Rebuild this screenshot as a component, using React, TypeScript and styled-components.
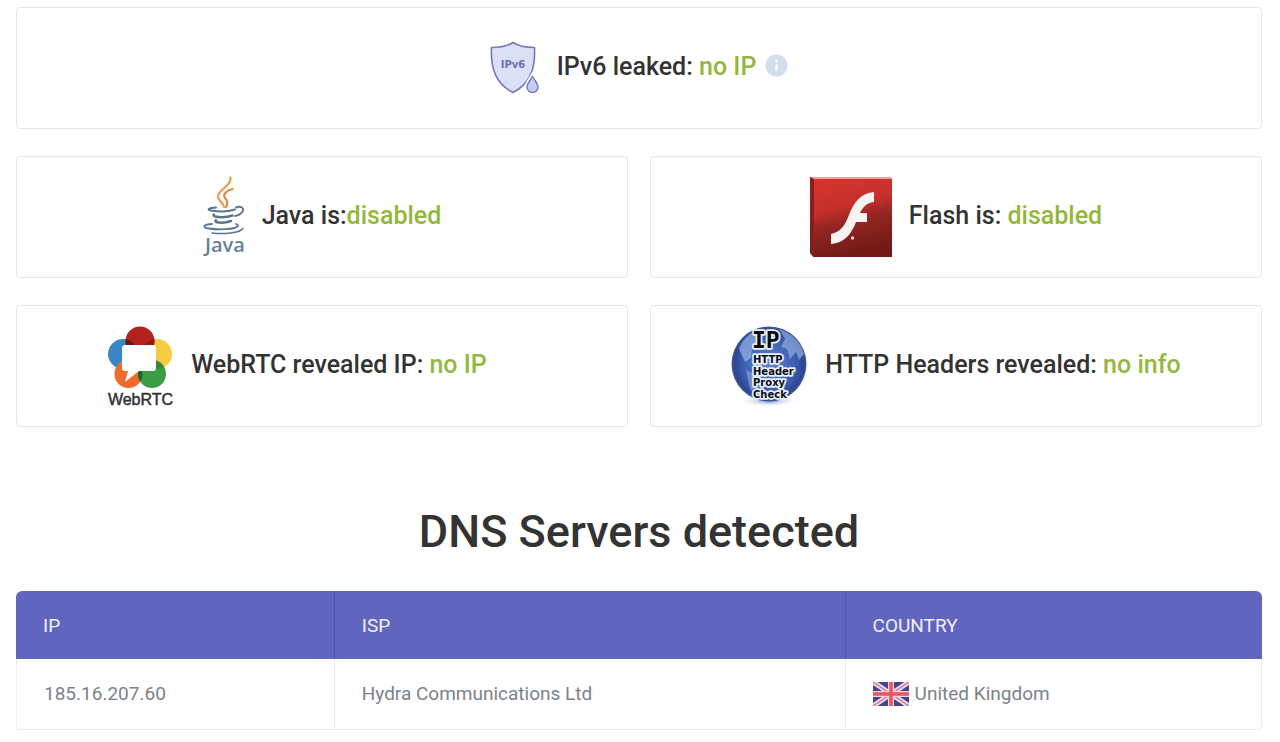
import React from 'react';
import styled, { createGlobalStyle } from 'styled-components';

const GlobalStyle = createGlobalStyle`
  *, *::before, *::after { box-sizing: border-box; }
  body {
    margin: 0;
    background: #fff;
    color: #333;
    font-family: Roboto, "Liberation Sans", sans-serif;
  }
`;

const Page = styled.main`
  padding: 7px 18px 12px 16px;
`;

const Grid = styled.section`
  display: grid;
  grid-template-columns: 1fr 1fr;
  column-gap: 22px;
  row-gap: 27px;
`;

const Card = styled.article<{ $wide?: boolean; $trailing?: number }>`
  grid-column: ${(p) => (p.$wide ? '1 / -1' : 'auto')};
  display: flex;
  align-items: center;
  justify-content: center;
  gap: 17px;
  min-height: 122px;
  padding: 8px ${(p) => p.$trailing ?? 0}px 8px 0;
  border: 1px solid #e6e6e8;
  border-radius: 4px;
`;

const Label = styled.p`
  display: flex;
  align-items: center;
  margin: 0;
  padding-bottom: 2px;
  font-family: Roboto, "Noto Sans", sans-serif;
  font-size: 25px;
  font-weight: 500;
  line-height: 32px;
  white-space: pre;
`;

const Status = styled.span`
  color: #94b83d;
`;

const InfoButton = styled.button`
  display: flex;
  margin: 0 0 4px 9px;
  padding: 0;
  border: 0;
  background: none;
  cursor: pointer;
`;

const Title = styled.h2`
  margin: 73px 0 28px;
  font-family: Roboto, "Noto Sans", sans-serif;
  font-size: 45px;
  font-weight: 500;
  line-height: 63px;
  text-align: center;
`;

const Table = styled.table`
  width: 100%;
  table-layout: fixed;
  border-collapse: separate;
  border-spacing: 0;
  text-align: left;
  font-size: 19px;
  line-height: 24px;
`;

const Col = styled.col<{ $width: string }>`
  width: ${(p) => p.$width};
`;

const HeadCell = styled.th`
  height: 68px;
  padding: 1px 27px 0;
  background: #6265be;
  color: #f0f0fa;
  font-weight: 400;

  & + & { border-left: 1px solid #5356b2; }
  &:first-child { border-top-left-radius: 6px; }
  &:last-child { border-top-right-radius: 6px; }
`;

const Cell = styled.td`
  height: 71px;
  padding: 0 27px;
  border: solid #ececee;
  border-width: 0 0 1px 1px;
  color: #7b8389;

  &:first-child { border-bottom-left-radius: 4px; }
  &:last-child { border-right-width: 1px; border-bottom-right-radius: 4px; }
`;

const Country = styled.span`
  display: flex;
  align-items: center;
  gap: 6px;
`;

const ShieldIcon = () => (
  <svg width="50" height="56" viewBox="0 0 50 56" role="img" aria-label="IPv6 shield">
    <path d="M23 2.5C29 6.5 37 7.5 44.5 7.5C45.5 29 40 44 23 52.5C6 44 .5 29 1.5 7.5C9 7.5 17 6.5 23 2.5Z" fill="#dbe0f7" stroke="#7779b4" strokeWidth="1.6" strokeLinejoin="round" />
    <path d="M42.5 35.5C40 40 37 43 37 47A5.5 5.5 0 0 0 48 47C48 43 45 40 42.5 35.5Z" fill="#c3cdf1" stroke="#fff" strokeWidth="4" />
    <path d="M42.5 36.5C40 41 37 43.5 37 47A5.5 5.5 0 0 0 48 47C48 43.5 45 41 42.5 36.5Z" fill="#c3cdf1" stroke="#7779b4" strokeWidth="1.4" />
    <text x="23" y="28" textAnchor="middle" fontFamily="DejaVu Sans, sans-serif" fontWeight="700" fontSize="10" fill="#6d6fb3">IPv6</text>
  </svg>
);

const InfoIcon = () => (
  <svg width="23" height="23" viewBox="0 0 23 23" aria-hidden="true">
    <circle cx="11.5" cy="11.5" r="11" fill="#d2dee9" />
    <circle cx="11.5" cy="7" r="1.5" fill="#fff" />
    <path d="M11.5 10.5V16.5" stroke="#fff" strokeWidth="2.4" />
  </svg>
);

const JavaIcon = () => (
  <svg width="42" height="82" viewBox="0 0 42 82" role="img" aria-label="Java">
    <g fill="none" strokeLinecap="round">
      <path d="M27.5 1.5C29 10 14 14 15 21C16 26 21 27 21 31" stroke="#e9a057" strokeWidth="2.3" />
      <path d="M29.5 13C23 15 19.5 18 22 22C25 25 25 28 23 31" stroke="#d98c4a" strokeWidth="2.2" />
      <g stroke="#5d758c">
        <path d="M13 31.5C6 32 3 33.5 8 34.5C16 36 26 35.5 32 33.5" strokeWidth="1.9" />
        <path d="M33 31.5C38 29.5 41.5 32 39.5 35.5C38 38 35 39.5 32 40" strokeWidth="1.9" />
        <path d="M11 38.5C8 41 21 42.5 29.5 39.5" strokeWidth="2.5" />
        <path d="M13 44C10 46.5 20 48 28 45" strokeWidth="2.5" />
        <path d="M9 48C1 48.5 -2 51.5 6 52.5C16 54 31 53.5 34.5 50.5C35.5 49.5 34.5 48.5 33 48" strokeWidth="1.8" />
        <path d="M9 57C20 58.5 37 57 40 52.5" strokeWidth="1.5" />
      </g>
    </g>
    <text x="2" y="76" fontFamily="Open Sans, sans-serif" fontSize="20" fontWeight="600" fill="#66819a">Java</text>
  </svg>
);

const FlashIcon = () => (
  <svg width="82" height="82" viewBox="0 0 82 82" role="img" aria-label="Flash">
    <defs>
      <linearGradient id="flash" x1="0" y1="0" x2=".25" y2="1">
        <stop offset="0" stopColor="#d9362e" />
        <stop offset=".45" stopColor="#c42f2b" />
        <stop offset=".62" stopColor="#972723" />
        <stop offset="1" stopColor="#741b18" />
      </linearGradient>
    </defs>
    <path d="M0 1L3 3V78L4 82L0 77Z" fill="#6d1f1c" />
    <path d="M0 1H80L82 3V81H4L1 77Z" fill="url(#flash)" />
    <path d="M0 1L4 3.5V79L1 77Z" fill="#861f1d" />
    <path d="M1 1H81V3H4Z" fill="#eba29c" />
    <path d="M64 16V26C56 27 53 31 50 37H57V46H46C41 59 34 67 21 68V58C31 56 35 49 39 39C44 26 51 17 64 16Z" fill="#f7f3f1" />
    <circle cx="42.5" cy="62" r="1.7" fill="#e8cfcb" />
  </svg>
);

const WebRtcIcon = () => (
  <svg width="67" height="82" viewBox="0 0 67 82" role="img" aria-label="WebRTC">
    <defs>
      <clipPath id="rtcRed"><circle cx="33" cy="16" r="14.5" /></clipPath>
      <clipPath id="rtcGreen"><circle cx="45" cy="49" r="14" /></clipPath>
    </defs>
    <circle cx="16" cy="29" r="15" fill="#3a87c7" />
    <circle cx="50" cy="29" r="15" fill="#f8cb42" />
    <circle cx="21.5" cy="49" r="14" fill="#ef6a2b" />
    <circle cx="45" cy="49" r="14" fill="#3a9c45" />
    <circle cx="33" cy="16" r="14.5" fill="#b3231d" />
    <g clipPath="url(#rtcRed)">
      <circle cx="16" cy="29" r="15" fill="#5f1919" />
      <circle cx="50" cy="29" r="15" fill="#9b170f" />
    </g>
    <g clipPath="url(#rtcGreen)">
      <circle cx="21.5" cy="49" r="14" fill="#18652b" />
      <circle cx="50" cy="29" r="15" fill="#3a8a35" />
    </g>
    <path d="M18 20H46Q49 20 49 23V43Q49 46 46 46H32L18 57L21 46H18Q15 46 15 43V23Q15 20 18 20Z" fill="#fff" />
    <text x="33.5" y="80" textAnchor="middle" fontFamily="Liberation Sans, Arial, sans-serif" fontSize="16" fill="#333" stroke="#333" strokeWidth=".5">WebRTC</text>
  </svg>
);

const GlobeIcon = () => (
  <svg width="77" height="82" viewBox="0 0 77 82" role="img" aria-label="IP HTTP header proxy check">
    <defs>
      <radialGradient id="globe" cx=".5" cy=".5" r=".5">
        <stop offset="0" stopColor="#5f86cf" />
        <stop offset=".7" stopColor="#3b5eb3" />
        <stop offset=".93" stopColor="#2c4692" />
        <stop offset="1" stopColor="#4c5a93" />
      </radialGradient>
      <radialGradient id="globeShade">
        <stop offset="0" stopColor="#6f8fca" />
        <stop offset="1" stopColor="#fff" stopOpacity="0" />
      </radialGradient>
    </defs>
    <ellipse cx="38" cy="76" rx="30" ry="6" fill="url(#globeShade)" />
    <circle cx="38" cy="39" r="37.5" fill="url(#globe)" />
    <path d="M8 24C12 12 22 5 32 4L35 9L28 12L26 20L21 24L20 33L14 37Z" fill="#91ade0" opacity=".75" />
    <path d="M48 4C61 8 70 18 73 29L68 35L65 27L59 34L56 24L50 22L54 14Z" fill="#91ade0" opacity=".7" />
    <path d="M15 45L24 49L28 58L26 71L19 64Z" fill="#8aa6da" opacity=".65" />
    <g fontFamily="DejaVu Sans, sans-serif" fontWeight="700" fill="#090c14" stroke="#eaf0fb" strokeWidth="3.5" strokeLinejoin="round" paintOrder="stroke">
      <text x="21" y="23" fontFamily="DejaVu Sans Mono, monospace" fontSize="23">IP</text>
      <g fontSize="10">
        <text x="22" y="38">HTTP</text>
        <text x="22" y="50">Header</text>
        <text x="22" y="61">Proxy</text>
        <text x="22" y="73">Check</text>
      </g>
    </g>
  </svg>
);

const UkFlag = () => (
  <svg width="36" height="24" viewBox="0 0 36 24" aria-hidden="true">
    <path d="M0 0H36V24H0Z" fill="#46458c" />
    <path d="M0 0L36 24M36 0L0 24" stroke="#e6dfef" strokeWidth="5" />
    <path d="M0 0L18 12M36 24L18 12M36 0L18 12M0 24L18 12" stroke="#df7183" strokeWidth="1.4" />
    <path d="M18 0V24M0 12H36" stroke="#efd3df" strokeWidth="6" />
    <path d="M18 0V24M0 12H36" stroke="#ea5562" strokeWidth="3.5" />
  </svg>
);

const servers = [{ ip: '185.16.207.60', isp: 'Hydra Communications Ltd', country: 'United Kingdom' }];

export default function App() {
  return (
    <>
      <GlobalStyle />
      <Page>
        <Grid>
          <Card $wide>
            <ShieldIcon />
            <Label>
              IPv6 leaked: <Status>no IP</Status>
              <InfoButton type="button" aria-label="About IPv6 leaks"><InfoIcon /></InfoButton>
            </Label>
          </Card>
          <Card>
            <JavaIcon />
            <Label>Java is:<Status>disabled</Status></Label>
          </Card>
          <Card>
            <FlashIcon />
            <Label>Flash is: <Status>disabled</Status></Label>
          </Card>
          <Card $trailing={50}>
            <WebRtcIcon />
            <Label>WebRTC revealed IP: <Status>no IP</Status></Label>
          </Card>
          <Card>
            <GlobeIcon />
            <Label>HTTP Headers revealed: <Status>no info</Status></Label>
          </Card>
        </Grid>
        <Title>DNS Servers detected</Title>
        <Table>
          <colgroup>
            <Col $width="25.5%" />
            <Col $width="41%" />
            <Col $width="33.5%" />
          </colgroup>
          <thead>
            <tr>
              <HeadCell scope="col">IP</HeadCell>
              <HeadCell scope="col">ISP</HeadCell>
              <HeadCell scope="col">COUNTRY</HeadCell>
            </tr>
          </thead>
          <tbody>
            {servers.map((s) => (
              <tr key={s.ip}>
                <Cell>{s.ip}</Cell>
                <Cell>{s.isp}</Cell>
                <Cell><Country><UkFlag />{s.country}</Country></Cell>
              </tr>
            ))}
          </tbody>
        </Table>
      </Page>
    </>
  );
}
